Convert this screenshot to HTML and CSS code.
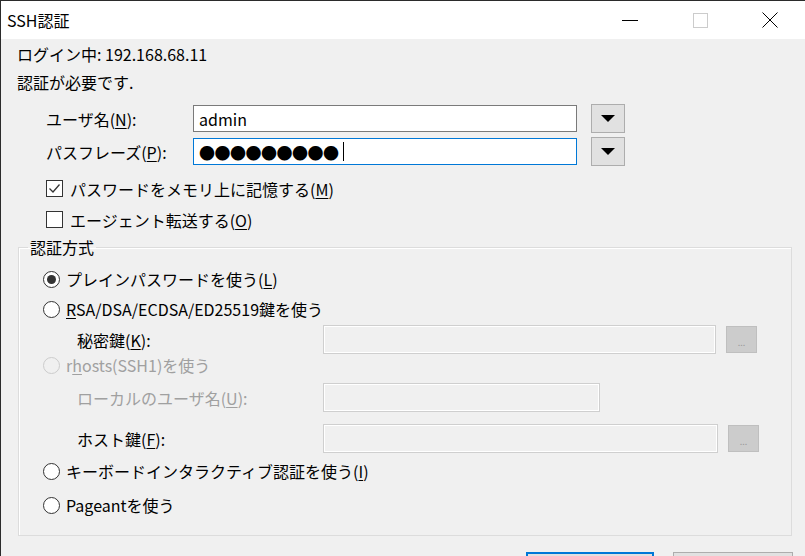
FILE: index.html
```html
<!DOCTYPE html>
<html>
<head>
<meta charset="utf-8">
<link rel="stylesheet" href="styles.css">
</head>
<body>
<div class="window">
    <div class="titlebar">
        <span class="title">SSH認証</span>
        <div class="controls">
            <span class="ctl"><svg width="16" height="16" viewBox="0 0 16 16"><line x1="0" y1="8.5" x2="16" y2="8.5" stroke="#000" stroke-width="1"/></svg></span>
            <span class="ctl"><svg width="16" height="16" viewBox="0 0 16 16"><rect x="1.5" y="1.5" width="14" height="14" fill="none" stroke="#cccccc" stroke-width="1"/></svg></span>
            <span class="ctl"><svg width="16" height="16" viewBox="0 0 16 16"><path d="M0.5 0.5 L15.5 15.5 M15.5 0.5 L0.5 15.5" stroke="#000" stroke-width="1" fill="none"/></svg></span>
        </div>
    </div>
    <div class="client">
        <div class="info">ログイン中: 192.168.68.11</div>
        <div class="info">認証が必要です.</div>

        <div class="field first">
            <span class="lbl">ユーザ名(<u>N</u>):</span>
            <div class="edit">admin</div>
            <div class="drop"><svg width="14" height="8" viewBox="0 0 14 8"><path d="M0 0 H14 L7 7 Z" fill="#000"/></svg></div>
        </div>
        <div class="field">
            <span class="lbl">パスフレーズ(<u>P</u>):</span>
            <div class="edit focus"><span class="dots">●●●●●●●●●</span><span class="caret"></span></div>
            <div class="drop"><svg width="14" height="8" viewBox="0 0 14 8"><path d="M0 0 H14 L7 7 Z" fill="#000"/></svg></div>
        </div>

        <div class="check first">
            <span class="box"><svg width="15" height="15" viewBox="0 0 15 15"><path d="M2.5 7.5 L6 11 L12.5 3.5" stroke="#333" stroke-width="1.3" fill="none"/></svg></span>
            <span>パスワードをメモリ上に記憶する(<u>M</u>)</span>
        </div>
        <div class="check">
            <span class="box"></span>
            <span>エージェント転送する(<u>O</u>)</span>
        </div>

        <fieldset class="group">
            <legend>認証方式</legend>
            <div class="radio r1">
                <span class="dot on"></span>
                <span>プレインパスワードを使う(<u>L</u>)</span>
            </div>
            <div class="radio">
                <span class="dot"></span>
                <span><u>R</u>SA/DSA/ECDSA/ED25519鍵を使う</span>
            </div>
            <div class="sub">
                <span class="sublbl">秘密鍵(<u>K</u>):</span>
                <div class="edit off wide"></div>
                <div class="browse">...</div>
            </div>
            <div class="radio disabled rh">
                <span class="dot"></span>
                <span>r<u>h</u>osts(SSH1)を使う</span>
            </div>
            <div class="sub local disabled">
                <span class="sublbl">ローカルのユーザ名(<u>U</u>):</span>
                <div class="edit off short"></div>
            </div>
            <div class="sub host">
                <span class="sublbl">ホスト鍵(<u>F</u>):</span>
                <div class="edit off wider"></div>
                <div class="browse">...</div>
            </div>
            <div class="radio kb">
                <span class="dot"></span>
                <span>キーボードインタラクティブ認証を使う(<u>I</u>)</span>
            </div>
            <div class="radio pg">
                <span class="dot"></span>
                <span>Pageantを使う</span>
            </div>
        </fieldset>

        <div class="buttons">
            <div class="btn default"></div>
            <div class="btn"></div>
        </div>
    </div>
</div>
</body>
</html>
```

FILE: styles.css
```css
body{
    margin:0;
    font-family:"Noto Sans CJK JP", "Noto Sans", sans-serif;
    font-size:16px;
    color:#000;
    background:#f0f0f0;
}
u{
    text-underline-offset:2px;
}
.window{
    width:804px;
    height:555px;
    border-left:1px solid #2b2b2b;
    border-top:1px solid #2b2b2b;
    background:#f0f0f0;
    overflow:hidden;
}
.titlebar{
    height:38px;
    background:#fff;
    display:flex;
    align-items:center;
}
.title{
    flex:1;
    padding-left:6px;
    font-size:16px;
}
.controls{
    display:flex;
    height:100%;
}
.ctl{
    width:70px;
    display:flex;
    align-items:center;
    justify-content:center;
}
.client{
    padding-top:1px;
}
.info{
    height:28px;
    line-height:28px;
    padding-left:16px;
}
.field{
    display:flex;
    align-items:center;
    height:33px;
    padding-left:45px;
}
.field.first{
    margin-top:6px;
}
.lbl{
    width:147px;
}
.edit{
    box-sizing:border-box;
    width:384px;
    height:27px;
    border:1px solid #7a7a7a;
    background:#fff;
    padding-left:5px;
    display:flex;
    align-items:center;
}
.edit.focus{
    border-color:#0078d7;
}
.dots{
    letter-spacing:-0.5px;
}
.caret{
    display:inline-block;
    width:1px;
    height:19px;
    background:#000;
    margin-left:4px;
}
.drop{
    box-sizing:border-box;
    width:34px;
    height:29px;
    margin-left:14px;
    background:#e1e1e1;
    border:1px solid #adadad;
    display:flex;
    align-items:center;
    justify-content:center;
}
.check{
    display:flex;
    align-items:center;
    height:31px;
    padding-left:45px;
}
.check.first{
    margin-top:5px;
}
.box{
    box-sizing:border-box;
    width:17px;
    height:17px;
    border:1px solid #333;
    background:#fff;
    margin-right:7px;
    display:flex;
    align-items:center;
    justify-content:center;
}
.group{
    margin:4px 0 0 17px;
    width:774px;
    box-sizing:border-box;
    height:297px;
    padding:0 0 0 24px;
    border:1px solid #dcdcdc;
    box-shadow:inset 1px 1px #fff;
}
.group legend{
    margin-left:-15px;
    padding:0 2px;
    line-height:16px;
}
.radio{
    display:flex;
    align-items:center;
    height:30px;
}
.radio.r1{
    margin-top:9px;
}
.dot{
    box-sizing:border-box;
    width:17px;
    height:17px;
    border:1px solid #333;
    border-radius:50%;
    background:#fff;
    margin-right:6px;
    display:flex;
    align-items:center;
    justify-content:center;
}
.dot.on::after{
    content:"";
    width:9px;
    height:9px;
    border-radius:50%;
    background:#333;
}
.disabled{
    color:#a0a0a0;
}
.disabled .dot{
    border-color:#cccccc;
    background:#f0f0f0;
}
.sub{
    display:flex;
    align-items:center;
    height:31px;
    padding-left:34px;
}
.sublbl{
    width:246px;
}
.edit.off{
    background:#f0f0f0;
    border:1px solid #cfcfcf;
    box-shadow:inset -1px -1px #fff, inset 1px 1px #fff;
    height:29px;
}
.edit.wide{
    width:393px;
}
.edit.wider{
    width:395px;
}
.edit.short{
    width:277px;
}
.browse{
    box-sizing:border-box;
    width:31px;
    height:27px;
    margin-left:10px;
    background:#cccccc;
    border:1px solid #bfbfbf;
    color:#9a9a9a;
    font-size:9px;
    display:flex;
    align-items:flex-end;
    justify-content:center;
    padding-bottom:5px;
    line-height:9px;
}
.radio.rh{
    height:20px;
}
.sub.local{
    margin-top:8px;
    height:29px;
}
.sub.host{
    margin-top:12px;
    height:29px;
}
.radio.kb{
    margin-top:3px;
}
.radio.pg{
    margin-top:4px;
}
.buttons{
    display:flex;
    justify-content:flex-end;
    gap:19px;
    margin-top:16px;
    padding-right:12px;
}
.btn{
    box-sizing:border-box;
    width:120px;
    height:32px;
    background:#e1e1e1;
    border:1px solid #adadad;
}
.btn.default{
    width:128px;
    border:2px solid #0078d7;
}
```
